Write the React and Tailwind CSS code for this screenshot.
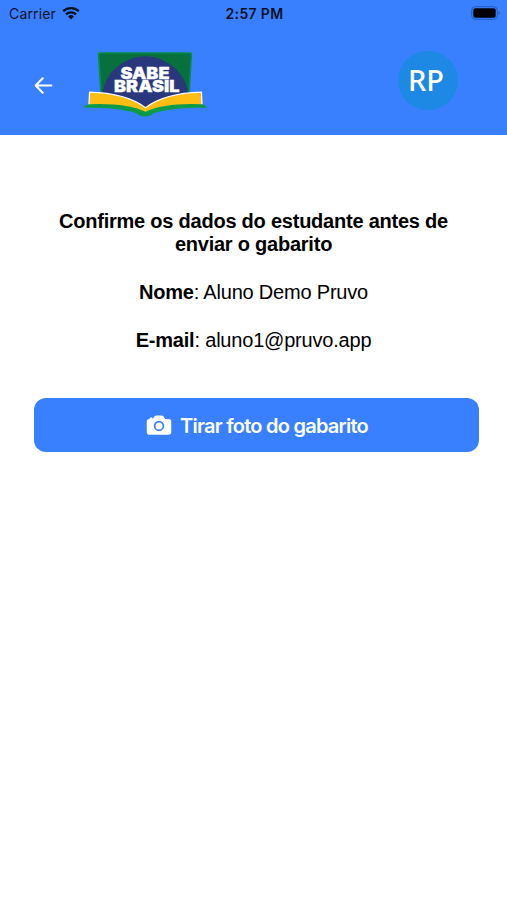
import { IoCamera } from "react-icons/io5";

const student = {
  name: "Aluno Demo Pruvo",
  email: "aluno1@pruvo.app",
};

const WifiIcon = () => (
  <svg className="w-[18px] h-[14px]" viewBox="0 0 18 14" fill="none">
    <path
      d="M1.2 5.2a11.2 11.2 0 0115.6 0M4 8.3a7.2 7.2 0 0110 0"
      stroke="#081227"
      strokeWidth={2.3}
    />
    <path d="M9 13.5l-3-3a4.3 4.3 0 016 0z" fill="#081227" />
  </svg>
);

const BatteryIcon = () => (
  <svg className="w-[30px] h-[14px]" viewBox="0 0 30 14" fill="none">
    <rect x="0.7" y="0.7" width="25.6" height="12.6" rx="3.6" stroke="#245bbd" />
    <rect x="2.3" y="2.3" width="22.4" height="9.4" rx="2" fill="#000" />
    <path d="M27.7 5v4c1.6-.6 1.6-3.4 0-4z" fill="#245bbd" />
  </svg>
);

const StatusBar = () => (
  <div className="grid grid-cols-3 items-center h-[26px] pl-[8px] pr-[6px] text-[#081227] text-[14px] font-['Inter',sans-serif]">
    <div className="flex items-center gap-[6px] pl-px">
      <span className="tracking-[0.15px]">Carrier</span>
      <WifiIcon />
    </div>
    <span className="text-center font-semibold tracking-[0.35px]">2:57 PM</span>
    <div className="flex justify-end">
      <BatteryIcon />
    </div>
  </div>
);

const Logo = () => (
  <svg
    className="w-[124px] h-[68px]"
    viewBox="0 0 124 68"
    role="img"
    aria-label="Sabe Brasil"
  >
    {/* Cover */}
    <path
      d="M16.5 2h89q2 0 1.8 2L104.5 50h-87L14.7 4q-.2-2 1.8-2z"
      fill="#07703d"
      stroke="#078c46"
      strokeWidth={1.6}
    />
    <path d="M17.500 50a43.500 44.500 0 0187.500 0L61 60z" fill="#29377d" />
    {/* Pages */}
    <path
      d="M0 56.500q2-3 5-3.500 37-3 56 6.500 19-9.500 57-6.500 3 .5 5 3.500-36 0-54 6-2 3-8 3t-8-3Q36 56.500 0 56.500z"
      fill="#0a9b49"
    />
    <path
      d="M5.500 41.200q37 1 56 15.600 19-14.600 56-15.600l.5 12q-37.500-1.500-56.500 7.500-19-9-56.500-7.500z"
      fill="#fdbd13"
    />
    <path
      d="M5 53.200l.5-12q37 1 56 15.600 19-14.600 56-15.600l.5 12"
      fill="none"
      stroke="#fff"
      strokeWidth={1.2}
      strokeLinejoin="round"
    />
    <g
      fill="#fff"
      stroke="#fff"
      strokeWidth={0.3}
      fontFamily="Inter, sans-serif"
      fontWeight="900"
      fontSize="16.500"
      textAnchor="middle"
    >
      <text x="61" y="27.800" textLength="49" lengthAdjust="spacingAndGlyphs">
        SABE
      </text>
      <text x="62.800" y="41.300" textLength="65.500" lengthAdjust="spacingAndGlyphs">
        BRASIL
      </text>
    </g>
  </svg>
);

const Header = () => (
  <header className="bg-[#3880ff] h-[135px]">
    <StatusBar />
    <div className="flex items-start pl-[34px] pr-[49px]">
      <button className="mt-[50px] text-white" aria-label="Voltar">
        <svg
          className="w-[19px] h-[19px]"
          viewBox="0 0 19 19"
          fill="none"
          stroke="currentColor"
          strokeWidth={2.1}
        >
          <path
            strokeLinecap="round"
            strokeLinejoin="round"
            d="M8.700 2.300L1.700 9.500l7 7.200M2 9.500h15.300"
          />
        </svg>
      </button>
      <div className="mt-[25px] ml-[31px]">
        <Logo />
      </div>
      <div className="mt-[25px] ml-auto flex items-center justify-center w-[60px] h-[59px] pb-[2px] pr-[4px] rounded-full bg-[#1e88e5] text-white text-[29px] font-medium font-['Noto_Sans',sans-serif]">
        <span>RP</span>
      </div>
    </div>
  </header>
);

const App = () => {
  return (
    <div className="min-h-screen bg-white text-black font-['Liberation_Sans',sans-serif]">
      <Header />
      <main className="pl-[34px] pr-[28px] pt-[75px] text-center text-[20px]">
        <div className="pr-[6px] leading-[23px] tracking-[-0.2px]">
          <h1 className="font-bold tracking-[-0.23px]">
            Confirme os dados do estudante antes de
            <br />
            enviar o gabarito
          </h1>
          <p className="mt-[25px]">
            <strong>Nome</strong>: {student.name}
          </p>
          <p className="mt-[25px]">
            <strong>E-mail</strong>: {student.email}
          </p>
        </div>
        <button className="mt-[46px] flex items-center justify-center gap-[7px] w-full h-[54px] rounded-[12px] bg-[#3880ff] text-white font-semibold font-['Inter',sans-serif]">
          <IoCamera className="w-7 h-7" />
          <span className="pt-px tracking-[-0.75px]">Tirar foto do gabarito</span>
        </button>
      </main>
    </div>
  );
};

export default App;
